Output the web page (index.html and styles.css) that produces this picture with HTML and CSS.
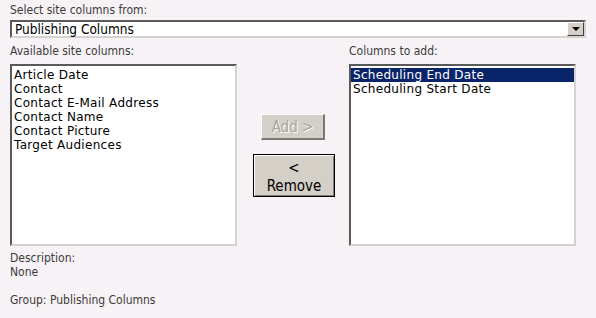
FILE: index.html
```html
<!DOCTYPE html>
<html lang="en">
<head>
    <meta charset="UTF-8">
    <title>Add Site Columns</title>
    <link rel="stylesheet" href="styles.css">
</head>
<body>
    <div class="picker">
        <div class="label">Select site columns from:</div>
        <div class="group-select">
            <span class="group-value">Publishing Columns</span>
            <span class="drop-button"><span class="arrow"></span></span>
        </div>

        <div class="columns-row">
            <div class="list-col">
                <div class="label">Available site columns:</div>
                <div class="listbox">
                    <div class="item">Article Date</div>
                    <div class="item">Contact</div>
                    <div class="item">Contact E-Mail Address</div>
                    <div class="item">Contact Name</div>
                    <div class="item">Contact Picture</div>
                    <div class="item">Target Audiences</div>
                </div>
            </div>
            <div class="button-col">
                <button class="btn btn-add" disabled>Add &gt;</button>
                <button class="btn btn-remove">&lt;<br>Remove</button>
            </div>
            <div class="list-col">
                <div class="label">Columns to add:</div>
                <div class="listbox">
                    <div class="item selected">Scheduling End Date</div>
                    <div class="item">Scheduling Start Date</div>
                </div>
            </div>
        </div>

        <div class="details">
            <div class="label">Description:</div>
            <div class="label">None</div>
            <div class="label group-line">Group: Publishing Columns</div>
        </div>
    </div>
</body>
</html>
```

FILE: styles.css
```css
body {
    margin: 0;
    background-color: #f7f2f5;
    font-family: 'DejaVu Sans', sans-serif;
    font-stretch: condensed;
    font-size: 12px;
    color: #000;
}

.picker {
    padding: 3px 10px 0 10px;
}

.label {
    color: #3c3c3c;
    line-height: 14px;
    height: 14px;
}

.group-select {
    display: flex;
    align-items: center;
    margin-top: 3px;
    width: 572px;
    height: 14px;
    background-color: #fff;
    border-top: 2px solid #5a5a5a;
    border-left: 2px solid #5a5a5a;
    border-right: 2px solid #d6d3cf;
    border-bottom: 2px solid #d6d3cf;
}

.group-value {
    flex: 1;
    padding-left: 3px;
    font-size: 13.5px;
    line-height: 14px;
}

.drop-button {
    display: flex;
    align-items: center;
    justify-content: center;
    width: 15px;
    height: 12px;
    background-color: #d4d0c8;
    border-top: 1px solid #fff;
    border-left: 1px solid #fff;
    border-right: 1px solid #404040;
    border-bottom: 1px solid #404040;
}

.arrow {
    width: 0;
    height: 0;
    border-left: 4px solid transparent;
    border-right: 4px solid transparent;
    border-top: 4px solid #000;
}

.columns-row {
    display: flex;
    margin-top: 6px;
}

.list-col {
    width: 227px;
}

.listbox {
    margin-top: 6px;
    height: 176px;
    background-color: #fff;
    border-top: 2px solid #5a5a5a;
    border-left: 2px solid #5a5a5a;
    border-right: 2px solid #d6d3cf;
    border-bottom: 2px solid #d6d3cf;
    padding-top: 2px;
}

.item {
    font-size: 12px;
    font-stretch: normal;
    letter-spacing: 0.3px;
    line-height: 14px;
    height: 14px;
    padding-left: 2px;
}

.item.selected {
    background-color: #0a246a;
    color: #fff;
}

.button-col {
    width: 112px;
    display: flex;
    flex-direction: column;
    align-items: center;
    padding-top: 70px;
    gap: 14px;
}

.btn {
    font-family: inherit;
    font-stretch: condensed;
    font-size: 15px;
    background-color: #d4d0c8;
    padding: 0;
    line-height: 18px;
}

.btn-add {
    width: 64px;
    height: 26px;
    color: #a7a6a1;
    text-shadow: 1px 1px 0 #fff;
    border-top: 1px solid #fff;
    border-left: 1px solid #fff;
    border-right: 2px solid #7a7874;
    border-bottom: 2px solid #7a7874;
}

.btn-remove {
    width: 82px;
    height: 43px;
    color: #000;
    border: 1px solid #000;
    box-shadow: inset 1px 1px 0 #fff, inset -1px -1px 0 #808080;
    padding-top: 2px;
    margin-left: 2px;
}

.details {
    margin-top: 5px;
}

.group-line {
    margin-top: 14px;
}
```
